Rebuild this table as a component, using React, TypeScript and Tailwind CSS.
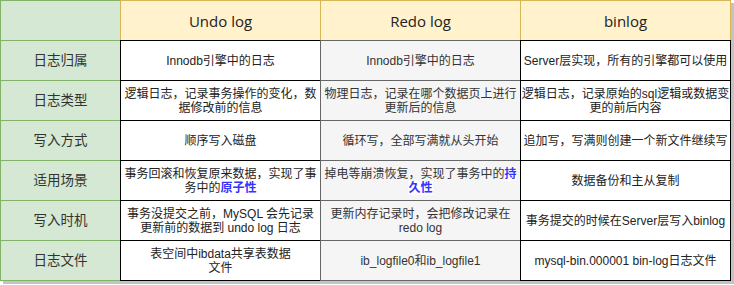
type Cell = { text: React.ReactNode; kind: "label" | "head" | "white" | "gray" | "corner" };

const hl = (s: string, bg?: boolean) => (
  <span className={`font-bold text-[#3333ff] ${bg ? "bg-white" : ""}`}>{s}</span>
);

const rows: Cell[][] = [
  [
    { text: "", kind: "corner" },
    { text: "Undo log", kind: "head" },
    { text: "Redo log", kind: "head" },
    { text: "binlog", kind: "head" },
  ],
  [
    { text: "日志归属", kind: "label" },
    { text: "Innodb引擎中的日志", kind: "white" },
    { text: "Innodb引擎中的日志", kind: "gray" },
    { text: "Server层实现，所有的引擎都可以使用", kind: "white" },
  ],
  [
    { text: "日志类型", kind: "label" },
    { text: <>逻辑日志，记录事务操作的变化，数<br />据修改前的信息</>, kind: "white" },
    { text: <>物理日志，记录在哪个数据页上进行<br />更新后的信息</>, kind: "gray" },
    { text: <>逻辑日志，记录原始的sql逻辑或数据变<br />更的前后内容</>, kind: "white" },
  ],
  [
    { text: "写入方式", kind: "label" },
    { text: "顺序写入磁盘", kind: "white" },
    { text: "循环写，全部写满就从头开始", kind: "gray" },
    { text: "追加写，写满则创建一个新文件继续写", kind: "white" },
  ],
  [
    { text: "适用场景", kind: "label" },
    { text: <>事务回滚和恢复原来数据，实现了事<br />务中的{hl("原子性")}</>, kind: "white" },
    { text: <>掉电等崩溃恢复，实现了事务中的{hl("持", true)}<br />{hl("久性", true)}</>, kind: "gray" },
    { text: "数据备份和主从复制", kind: "white" },
  ],
  [
    { text: "写入时机", kind: "label" },
    { text: <>事务没提交之前，MySQL 会先记录<br />更新前的数据到 undo log 日志</>, kind: "white" },
    { text: <>更新内存记录时，会把修改记录在<br />redo log</>, kind: "gray" },
    { text: "事务提交的时候在Server层写入binlog", kind: "white" },
  ],
  [
    { text: "日志文件", kind: "label" },
    { text: <>表空间中ibdata共享表数据<br />文件</>, kind: "white" },
    { text: "ib_logfile0和ib_logfile1", kind: "gray" },
    { text: "mysql-bin.000001 bin-log日志文件", kind: "white" },
  ],
];

const styles: Record<Cell["kind"], string> = {
  corner: "bg-[#d5e8d4] border-[#82b366]",
  label: "bg-[#d5e8d4] border-[#82b366] text-[13.5px] text-[#333]",
  head: "bg-[#fff2cc] border-[#d6b656] text-[15px] text-[#222] font-['Open_Sans',sans-serif]",
  white: "bg-white border-black text-[12px] text-[#222]",
  gray: "bg-[#f5f5f5] border-[#666666] text-[12px] text-[#333]",
};

export default function App() {
  return (
    <div className="bg-white w-[734px] h-[285px] font-['Liberation_Sans','Noto_Sans_CJK_SC',sans-serif]">
      <div className="w-[731px] h-[281px] shadow-[3px_3px_0_#c4c4c4]">
        <div className="grid grid-cols-[120px_200px_200px_210px] grid-rows-[repeat(7,40px)]">
          {rows.flatMap((row, r) =>
            row.map((c, i) => (
              <div
                key={`${r}-${i}`}
                className={`-mr-px -mb-px border flex items-center justify-center text-center leading-[14px] whitespace-nowrap ${styles[c.kind]}`}
              >
                <span>{c.text}</span>
              </div>
            ))
          )}
        </div>
      </div>
    </div>
  );
}
